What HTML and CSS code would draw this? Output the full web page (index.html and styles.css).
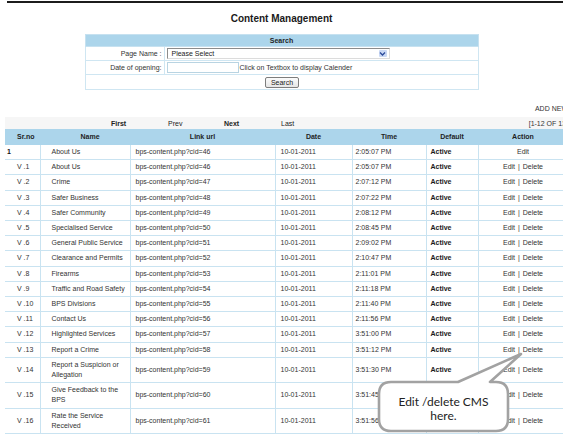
FILE: index.html
```html
<!DOCTYPE html>
<html>
<head>
<meta charset="utf-8">
<title>Content Management</title>
<link rel="stylesheet" href="styles.css">
</head>
<body>
<div class="topline"></div>
<h1 class="title">Content Management</h1>
<table class="search">
  <tr><th colspan="2">Search</th></tr>
  <tr class="srow">
    <td class="lbl">Page Name :</td>
    <td class="fld"><div class="select"><span class="sel-text">Please Select</span><span class="sel-arrow"><svg width="7" height="6" viewBox="0 0 7 6"><path d="M1 1.5 L3.5 4 L6 1.5" fill="none" stroke="#2a4a9a" stroke-width="1.3"/></svg></span></div></td>
  </tr>
  <tr class="srow">
    <td class="lbl">Date of opening:</td>
    <td class="fld"><span class="input"></span><span class="hint">Click on Textbox to display Calender</span></td>
  </tr>
  <tr class="brow"><td colspan="2" class="btncell"><span class="btn">Search</span></td></tr>
</table>

<div class="main">
  <div class="addnew">ADD NEW</div>
  <div class="pager">
    <span></span>
    <span class="plink strong">First</span>
    <span class="plink">Prev</span>
    <span class="plink strong">Next</span>
    <span class="plink">Last</span>
    <span class="pinfo">[1-12 OF 13]</span>
  </div>
  <table class="grid">
    <colgroup>
      <col class="c1"><col class="c2"><col class="c3"><col class="c4"><col class="c5"><col class="c6"><col class="c7">
    </colgroup>
    <thead>
      <tr><th class="h-sr">Sr.no</th><th class="h-nm">Name</th><th>Link url</th><th>Date</th><th>Time</th><th>Default</th><th>Action</th></tr>
    </thead>
    <tbody>
      <tr><td class="sr main-sr">1</td><td class="nm">About Us</td><td class="ln">bps-content.php?cid=46</td><td class="dt">10-01-2011</td><td class="tm">2:05:07 PM</td><td class="df">Active</td><td class="ac">Edit</td></tr>
      <tr><td class="sr">V .1</td><td class="nm">About Us</td><td class="ln">bps-content.php?cid=46</td><td class="dt">10-01-2011</td><td class="tm">2:05:07 PM</td><td class="df">Active</td><td class="ac">Edit <span class="bar">|</span> Delete</td></tr>
      <tr><td class="sr">V .2</td><td class="nm">Crime</td><td class="ln">bps-content.php?cid=47</td><td class="dt">10-01-2011</td><td class="tm">2:07:12 PM</td><td class="df">Active</td><td class="ac">Edit <span class="bar">|</span> Delete</td></tr>
      <tr><td class="sr">V .3</td><td class="nm">Safer Business</td><td class="ln">bps-content.php?cid=48</td><td class="dt">10-01-2011</td><td class="tm">2:07:22 PM</td><td class="df">Active</td><td class="ac">Edit <span class="bar">|</span> Delete</td></tr>
      <tr><td class="sr">V .4</td><td class="nm">Safer Community</td><td class="ln">bps-content.php?cid=49</td><td class="dt">10-01-2011</td><td class="tm">2:08:12 PM</td><td class="df">Active</td><td class="ac">Edit <span class="bar">|</span> Delete</td></tr>
      <tr><td class="sr">V .5</td><td class="nm">Specialised Service</td><td class="ln">bps-content.php?cid=50</td><td class="dt">10-01-2011</td><td class="tm">2:08:45 PM</td><td class="df">Active</td><td class="ac">Edit <span class="bar">|</span> Delete</td></tr>
      <tr><td class="sr">V .6</td><td class="nm">General Public Service</td><td class="ln">bps-content.php?cid=51</td><td class="dt">10-01-2011</td><td class="tm">2:09:02 PM</td><td class="df">Active</td><td class="ac">Edit <span class="bar">|</span> Delete</td></tr>
      <tr><td class="sr">V .7</td><td class="nm">Clearance and Permits</td><td class="ln">bps-content.php?cid=52</td><td class="dt">10-01-2011</td><td class="tm">2:10:47 PM</td><td class="df">Active</td><td class="ac">Edit <span class="bar">|</span> Delete</td></tr>
      <tr><td class="sr">V .8</td><td class="nm">Firearms</td><td class="ln">bps-content.php?cid=53</td><td class="dt">10-01-2011</td><td class="tm">2:11:01 PM</td><td class="df">Active</td><td class="ac">Edit <span class="bar">|</span> Delete</td></tr>
      <tr><td class="sr">V .9</td><td class="nm">Traffic and Road Safety</td><td class="ln">bps-content.php?cid=54</td><td class="dt">10-01-2011</td><td class="tm">2:11:18 PM</td><td class="df">Active</td><td class="ac">Edit <span class="bar">|</span> Delete</td></tr>
      <tr><td class="sr">V .10</td><td class="nm">BPS Divisions</td><td class="ln">bps-content.php?cid=55</td><td class="dt">10-01-2011</td><td class="tm">2:11:40 PM</td><td class="df">Active</td><td class="ac">Edit <span class="bar">|</span> Delete</td></tr>
      <tr><td class="sr">V .11</td><td class="nm">Contact Us</td><td class="ln">bps-content.php?cid=56</td><td class="dt">10-01-2011</td><td class="tm">2:11:56 PM</td><td class="df">Active</td><td class="ac">Edit <span class="bar">|</span> Delete</td></tr>
      <tr><td class="sr">V .12</td><td class="nm">Highlighted Services</td><td class="ln">bps-content.php?cid=57</td><td class="dt">10-01-2011</td><td class="tm">3:51:00 PM</td><td class="df">Active</td><td class="ac">Edit <span class="bar">|</span> Delete</td></tr>
      <tr><td class="sr">V .13</td><td class="nm">Report a Crime</td><td class="ln">bps-content.php?cid=58</td><td class="dt">10-01-2011</td><td class="tm">3:51:12 PM</td><td class="df">Active</td><td class="ac">Edit <span class="bar">|</span> Delete</td></tr>
      <tr><td class="sr">V .14</td><td class="nm">Report a Suspicion or Allegation</td><td class="ln">bps-content.php?cid=59</td><td class="dt">10-01-2011</td><td class="tm">3:51:30 PM</td><td class="df">Active</td><td class="ac">Edit <span class="bar">|</span> Delete</td></tr>
      <tr><td class="sr">V .15</td><td class="nm">Give Feedback to the BPS</td><td class="ln">bps-content.php?cid=60</td><td class="dt">10-01-2011</td><td class="tm">3:51:45 PM</td><td class="df">Active</td><td class="ac">Edit <span class="bar">|</span> Delete</td></tr>
      <tr><td class="sr">V .16</td><td class="nm">Rate the Service Received</td><td class="ln">bps-content.php?cid=61</td><td class="dt">10-01-2011</td><td class="tm">3:51:56 PM</td><td class="df">Active</td><td class="ac">Edit <span class="bar">|</span> Delete</td></tr>
    </tbody>
  </table>
</div>

<div class="callout">
  <svg class="callout-shape" width="150" height="90" viewBox="0 0 150 90">
    <path d="M16 32 L83 32 L146 4 L115 32 L121 32 Q133 32 133 44 L133 69 Q133 81 121 81 L16 81 Q4 81 4 69 L4 44 Q4 32 16 32 Z" fill="#ffffff" stroke="#a2a2a2" stroke-width="2.6" stroke-linejoin="round"/>
  </svg>
  <div class="callout-text">Edit /delete CMS<br>here.</div>
</div>
</body>
</html>
```

FILE: styles.css
```css
html, body {
  margin: 0;
  padding: 0;
}
body {
  width: 563px;
  height: 435px;
  overflow: hidden;
  position: relative;
  background: #ffffff;
  font-family: "Liberation Sans", Arial, sans-serif;
  font-size: 7px;
  color: #333333;
}

.topline {
  margin: 1px 0 0 7px;
  height: 2px;
  background: #1c1c1c;
}

.title {
  margin: 10px 0 0;
  font-size: 10px;
  line-height: 12px;
  text-align: center;
  font-weight: bold;
  color: #1a1a1a;
}

/* Search box */
.search {
  margin: 9px auto 0;
  width: 394px;
  border-collapse: collapse;
  border: 1px solid #c6e1f0;
}
.search th {
  background: #acd5eb;
  height: 11px;
  padding: 0;
  line-height: 11px;
  font-weight: bold;
  color: #1f1f1f;
  border: 1px solid #c6e1f0;
}
.search td {
  border: 1px solid #cfe6f2;
  padding: 0;
  height: 13px;
  vertical-align: middle;
}
.search .lbl {
  width: 76px;
  text-align: right;
  padding-right: 2px;
  white-space: nowrap;
}
.search .fld {
  padding-left: 2px;
}
.select {
  display: flex;
  align-items: center;
  justify-content: space-between;
  width: 221px;
  height: 9px;
  border: 1px solid #8c8c8c;
  border-right-color: #dcdcdc;
  border-bottom-color: #dcdcdc;
  background: #fff;
}
.sel-text {
  padding-left: 4px;
  line-height: 9px;
  color: #222;
}
.sel-arrow {
  display: flex;
  align-items: center;
  justify-content: center;
  width: 8px;
  height: 7px;
  margin-right: 2px;
  background: #c9d8f4;
  border-radius: 1px;
}
.input {
  display: inline-block;
  vertical-align: middle;
  width: 70px;
  height: 9px;
  border: 1px solid #b9d4e2;
  background: #fff;
}
.hint {
  vertical-align: middle;
  margin-left: 1px;
  color: #333;
}
.search .btncell {
  text-align: center;
  height: 14px;
}
.btn {
  display: inline-block;
  width: 32px;
  height: 9px;
  line-height: 9px;
  border: 1px solid #7d7d7d;
  border-radius: 2px;
  background: linear-gradient(#fbfbfb, #e6e6e6);
  color: #222;
  text-align: center;
  vertical-align: middle;
  margin-left: 1px;
}

/* Main list */
.main {
  margin: 14px 0 0 5px;
  width: 563px;
}
.addnew {
  text-align: right;
  line-height: 10px;
  padding-right: 0;
  color: #333;
}
.pager {
  display: grid;
  grid-template-columns: 106px 57px 56px 57px 1fr auto;
  align-items: center;
  margin-top: 3px;
  height: 12px;
  background: #f6f6f6;
}
.plink {
  color: #222;
}
.plink.strong {
  font-weight: bold;
}
.pinfo {
  padding-right: 0;
  color: #333;
}

.grid {
  width: 563px;
  table-layout: fixed;
  border-collapse: collapse;
}
.grid col.c1 { width: 35px; }
.grid col.c2 { width: 90px; }
.grid col.c3 { width: 145px; }
.grid col.c4 { width: 77px; }
.grid col.c5 { width: 74px; }
.grid col.c6 { width: 52px; }
.grid col.c7 { width: 90px; }

.grid th {
  background: #acd5eb;
  color: #1e1e1e;
  font-weight: bold;
  line-height: 10px;
  padding: 2px 2px;
  border: 1px solid #acd5eb;
  text-align: center;
}
.grid th.h-sr {
  padding-left: 9px;
}
.grid th.h-nm {
  padding-left: 12px;
}
.grid td {
  border: 1px solid #c9e3f1;
  padding: 2px 2px 2px 5px;
  line-height: 10.2px;
  vertical-align: middle;
  color: #333333;
}
.grid tr > :first-child {
  border-left: 0;
}
.grid td.sr {
  padding-left: 12px;
}
.grid td.main-sr {
  padding-left: 2px;
  font-weight: bold;
  color: #111;
}
.grid td.nm {
  padding-left: 11px;
}
.grid td.tm {
  padding-left: 3px;
}
.grid td.df {
  padding-left: 4px;
  font-weight: bold;
  color: #1a1a1a;
}
.grid td.ac {
  text-align: center;
  padding-left: 2px;
}
.bar {
  padding: 0 1px;
}

/* Callout overlay */
.callout {
  position: absolute;
  left: 375px;
  top: 350px;
  width: 150px;
  height: 90px;
}
.callout-shape {
  display: block;
}
.callout-text {
  position: absolute;
  left: 4px;
  top: 45px;
  width: 129px;
  text-align: center;
  font-family: Lato, "Open Sans", sans-serif;
  font-size: 12px;
  line-height: 14px;
  color: #222;
}
```
